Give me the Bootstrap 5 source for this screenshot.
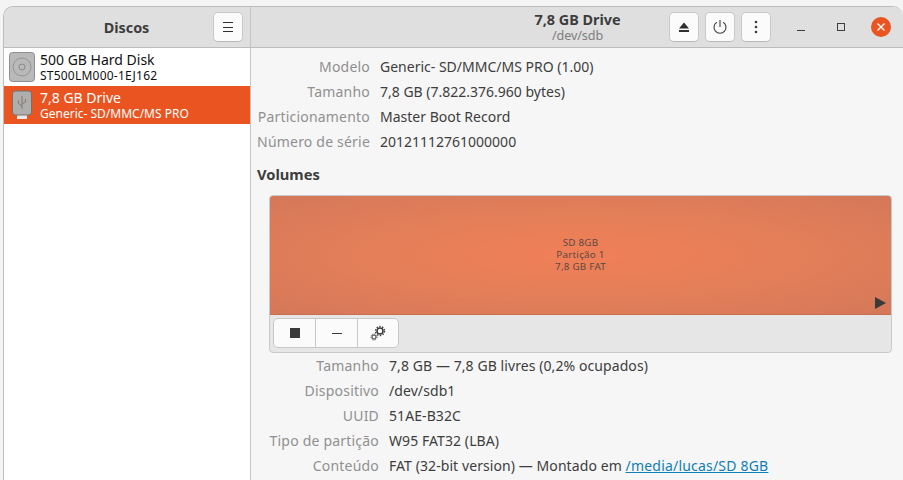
<!DOCTYPE html>
<html lang="pt">

<head>
    <meta charset="UTF-8">
    <meta name="viewport" content="width=device-width, initial-scale=1.0">
    <title>Discos</title>
    <link href="https://cdn.jsdelivr.net/npm/bootstrap@5.3.0/dist/css/bootstrap.min.css" rel="stylesheet">
    <style>
        html, body { height: 100%; }
        body {
            background: #f4f4f4;
            font-family: "Noto Sans", "Liberation Sans", sans-serif;
            font-size: 14px;
            color: #3d3d3d;
            overflow: hidden;
            padding: 6px 0 0 3px;
        }
        .app-window {
            height: 474px;
            background: #f6f6f6;
            border: 1px solid #bdbdbd;
            border-bottom: 0;
            border-right: 0;
            border-radius: 10px 10px 0 0;
            overflow: hidden;
        }
        .header-bar {
            height: 41px;
            background: #dfdfdf;
            border-bottom: 1px solid #bcbcbc;
        }
        .header-left {
            width: 247px;
            border-right: 1px solid #c4c4c4;
            padding-right: 7px;
            flex: none;
        }
        .header-main { padding-left: 235px; }
        .title { font-weight: 700; font-size: 14.4px; color: #3d3d3d; line-height: 17px; }
        .subtitle { font-size: 12.6px; color: #7d7d7d; line-height: 14px; margin-top: 1px; letter-spacing: -.1px; }
        .tool-btn {
            width: 30px;
            height: 30px;
            padding: 0;
            background: #fbfbfb;
            border: 1px solid #c8c8c8;
            border-bottom-color: #b8b8b8;
            border-radius: 5px;
            display: flex;
            align-items: center;
            justify-content: center;
        }
        .tool-group { gap: 6px; margin-right: 19px; }
        .win-group { gap: 18px; padding-right: 11px; }
        .win-btn { width: 22px; height: 22px; display: flex; align-items: center; justify-content: center; }
        .sidebar { width: 247px; flex: none; background: #fff; border-right: 1px solid #c4c4c4; }
        .disk-row { height: 38px; padding-left: 5px; gap: 5px; color: #111; }
        .disk-row.active { background: #e95420; color: #fff; }
        .disk-name { font-size: 14px; line-height: 17px; margin-bottom: 1px; }
        .disk-model { font-size: 12px; line-height: 14px; }
        .disk-model.wide { letter-spacing: .22px; }
        .disk-icon { width: 26px; flex: none; display: block; }
        .content { padding: 0 11px 0 6px; min-width: 0; }
        .props { display: grid; column-gap: 10px; row-gap: 0; font-size: 14px; }
        .props dt { font-weight: 400; color: #909090; text-align: right; line-height: 25.2px; margin: 0; letter-spacing: .2px; }
        .props dd { color: #3d3d3d; line-height: 25.2px; margin: 0; white-space: nowrap; }
        .props.drive { grid-template-columns: 113px 1fr; padding-top: 5.5px; }
        .props.volume { grid-template-columns: 122px 1fr; }
        .props.volume dt, .props.volume dd { line-height: 25px; }
        .props.volume dd { letter-spacing: .08px; }
        .volumes-title { font-weight: 700; font-size: 14.7px; margin: 9.5px 0 11px; line-height: 20px; color: #3d3d3d; }
        .volume-box {
            margin-left: 12px;
            background: #e6e6e6;
            border: 1px solid #c9c9c9;
            border-radius: 4px;
            overflow: hidden;
        }
        .volume-map {
            height: 119px;
            background: radial-gradient(ellipse at 50% 50%, #f07f57 0%, #e57f59 45%, #d47859 100%);
            border-bottom: 1px solid #c96f4f;
            color: #5a4a42;
            font-size: 9.8px;
            letter-spacing: .25px;
            line-height: 12px;
            text-align: center;
        }
        .play-mark {
            position: absolute;
            right: 5px;
            bottom: 5px;
            width: 0;
            height: 0;
            border-left: 11px solid #3a3a3a;
            border-top: 6px solid transparent;
            border-bottom: 6px solid transparent;
        }
        .vol-tools { padding: 3px 3px 4px; }
        .vol-tools .btn-group { background: #fbfbfb; border: 1px solid #c8c8c8; border-radius: 5px; height: 30px; overflow: hidden; }
        .vol-btn { width: 42px; display: flex; align-items: center; justify-content: center; border-right: 1px solid #c8c8c8; }
        .vol-btn:last-child { border-right: 0; width: 40px; }
        .mount-link { color: #0e7fb5; text-decoration: underline; letter-spacing: .2px; }
    </style>
</head>

<body>

    <div class="app-window d-flex flex-column">

        <div class="header-bar d-flex flex-shrink-0">
            <div class="header-left d-flex align-items-center">
                <div class="title flex-grow-1 text-center" style="padding-left:36px">Discos</div>
                <div class="tool-btn">
                    <svg width="12" height="12" viewBox="0 0 12 12"><path d="M1 1.500h10M1 6.500h10M1 10.500h10" stroke="#2e2e2e" stroke-width="1"/></svg>
                </div>
            </div>
            <div class="header-main d-flex flex-grow-1 align-items-center">
                <div class="flex-grow-1 text-center">
                    <div class="title">7,8 GB Drive</div>
                    <div class="subtitle">/dev/sdb</div>
                </div>
                <div class="tool-group d-flex align-items-center">
                    <div class="tool-btn">
                        <svg width="14" height="14" viewBox="0 0 14 14"><path d="M7 2.500 12 8.500H2Z" fill="#2e2e2e"/><rect x="2" y="10" width="10" height="2" fill="#2e2e2e"/></svg>
                    </div>
                    <div class="tool-btn">
                        <svg width="16" height="16" viewBox="0 0 16 16" fill="none" stroke="#3d3d3d" stroke-width="1.100"><path d="M4.800 3.200a6 6 0 1 0 6.400 0"/><path d="M8 1v7"/></svg>
                    </div>
                    <div class="tool-btn">
                        <svg width="4" height="14" viewBox="0 0 4 14"><circle cx="2" cy="2" r="1.300" fill="#3d3d3d"/><circle cx="2" cy="7" r="1.300" fill="#3d3d3d"/><circle cx="2" cy="12" r="1.300" fill="#3d3d3d"/></svg>
                    </div>
                </div>
                <div class="win-group d-flex align-items-center">
                    <div class="win-btn">
                        <svg width="10" height="10" viewBox="0 0 10 10"><path d="M1 8.500h8" stroke="#3d3d3d" stroke-width="1"/></svg>
                    </div>
                    <div class="win-btn">
                        <svg width="10" height="10" viewBox="0 0 10 10"><rect x="1.500" y="1.500" width="7" height="7" fill="none" stroke="#3d3d3d" stroke-width="1"/></svg>
                    </div>
                    <svg width="22" height="22" viewBox="0 0 22 22"><circle cx="11" cy="11" r="10" fill="#e95420"/><path d="M7.500 7.500l7 7M14.500 7.500l-7 7" stroke="#fff" stroke-width="1.400"/></svg>
                </div>
            </div>
        </div>

        <div class="d-flex flex-grow-1" style="min-height:0">
            <div class="sidebar">
                <div class="disk-row d-flex align-items-center">
                    <svg class="disk-icon" height="30" viewBox="0 0 26 30">
                        <rect x="0.500" y="0.500" width="25" height="29" rx="3" fill="#b9b9b9" stroke="#8e8e8e"/>
                        <circle cx="13" cy="15" r="9" fill="none" stroke="#959595"/>
                        <circle cx="13" cy="15" r="3" fill="none" stroke="#8a8a8a"/>
                    </svg>
                    <div>
                        <div class="disk-name">500 GB Hard Disk</div>
                        <div class="disk-model wide">ST500LM000-1EJ162</div>
                    </div>
                </div>
                <div class="disk-row active d-flex align-items-center">
                    <svg class="disk-icon" height="30" viewBox="0 0 26 30">
                        <rect x="8" y="24" width="10" height="5" fill="#e8e8e8"/>
                        <rect x="3.500" y="1" width="19" height="24" rx="3" fill="#b0aeac" stroke="#77716c"/>
                        <path d="M13 6v13M13 16l-3.500-2.500v-3M13 14l3.500-2v-3" fill="none" stroke="#807a75" stroke-width="1"/>
                    </svg>
                    <div>
                        <div class="disk-name">7,8 GB Drive</div>
                        <div class="disk-model">Generic- SD/MMC/MS PRO</div>
                    </div>
                </div>
            </div>

            <div class="content flex-grow-1">
                <dl class="props drive mb-0">
                    <dt>Modelo</dt><dd>Generic- SD/MMC/MS PRO (1.00)</dd>
                    <dt>Tamanho</dt><dd>7,8 GB (7.822.376.960 bytes)</dd>
                    <dt>Particionamento</dt><dd>Master Boot Record</dd>
                    <dt>Número de série</dt><dd>20121112761000000</dd>
                </dl>
                <div class="volumes-title">Volumes</div>
                <div class="volume-box">
                    <div class="volume-map position-relative d-flex align-items-center justify-content-center">
                        <div>SD 8GB<br>Partição 1<br>7,8 GB FAT</div>
                        <span class="play-mark"></span>
                    </div>
                    <div class="vol-tools d-flex">
                        <div class="btn-group d-inline-flex">
                            <div class="vol-btn">
                                <svg width="10" height="10" viewBox="0 0 10 10"><rect width="10" height="10" fill="#3a3a3a"/></svg>
                            </div>
                            <div class="vol-btn">
                                <svg width="10" height="10" viewBox="0 0 10 10"><path d="M0 5.500h10" stroke="#3a3a3a"/></svg>
                            </div>
                            <div class="vol-btn">
                                <svg width="16" height="16" viewBox="0 0 16 16" fill="none" stroke="#3a3a3a">
                                    <circle cx="10" cy="6" r="3" stroke-width="1.600"/>
                                    <circle cx="10" cy="6" r="4.600" stroke-width="1.200" stroke-dasharray="1.500 1.400"/>
                                    <circle cx="4" cy="12" r="2" stroke-width="1"/>
                                    <circle cx="4" cy="12" r="3" stroke-width="1" stroke-dasharray="1 1"/>
                                </svg>
                            </div>
                        </div>
                    </div>
                </div>
                <dl class="props volume mb-0">
                    <dt>Tamanho</dt><dd>7,8 GB — 7,8 GB livres (0,2% ocupados)</dd>
                    <dt>Dispositivo</dt><dd>/dev/sdb1</dd>
                    <dt>UUID</dt><dd>51AE-B32C</dd>
                    <dt>Tipo de partição</dt><dd>W95 FAT32 (LBA)</dd>
                    <dt>Conteúdo</dt><dd>FAT (32-bit version) — Montado em <a class="mount-link" href="#">/media/lucas/SD 8GB</a></dd>
                </dl>
            </div>
        </div>
    </div>

    <script src="https://cdn.jsdelivr.net/npm/bootstrap@5.3.0/dist/js/bootstrap.bundle.min.js"></script>
</body>

</html>
